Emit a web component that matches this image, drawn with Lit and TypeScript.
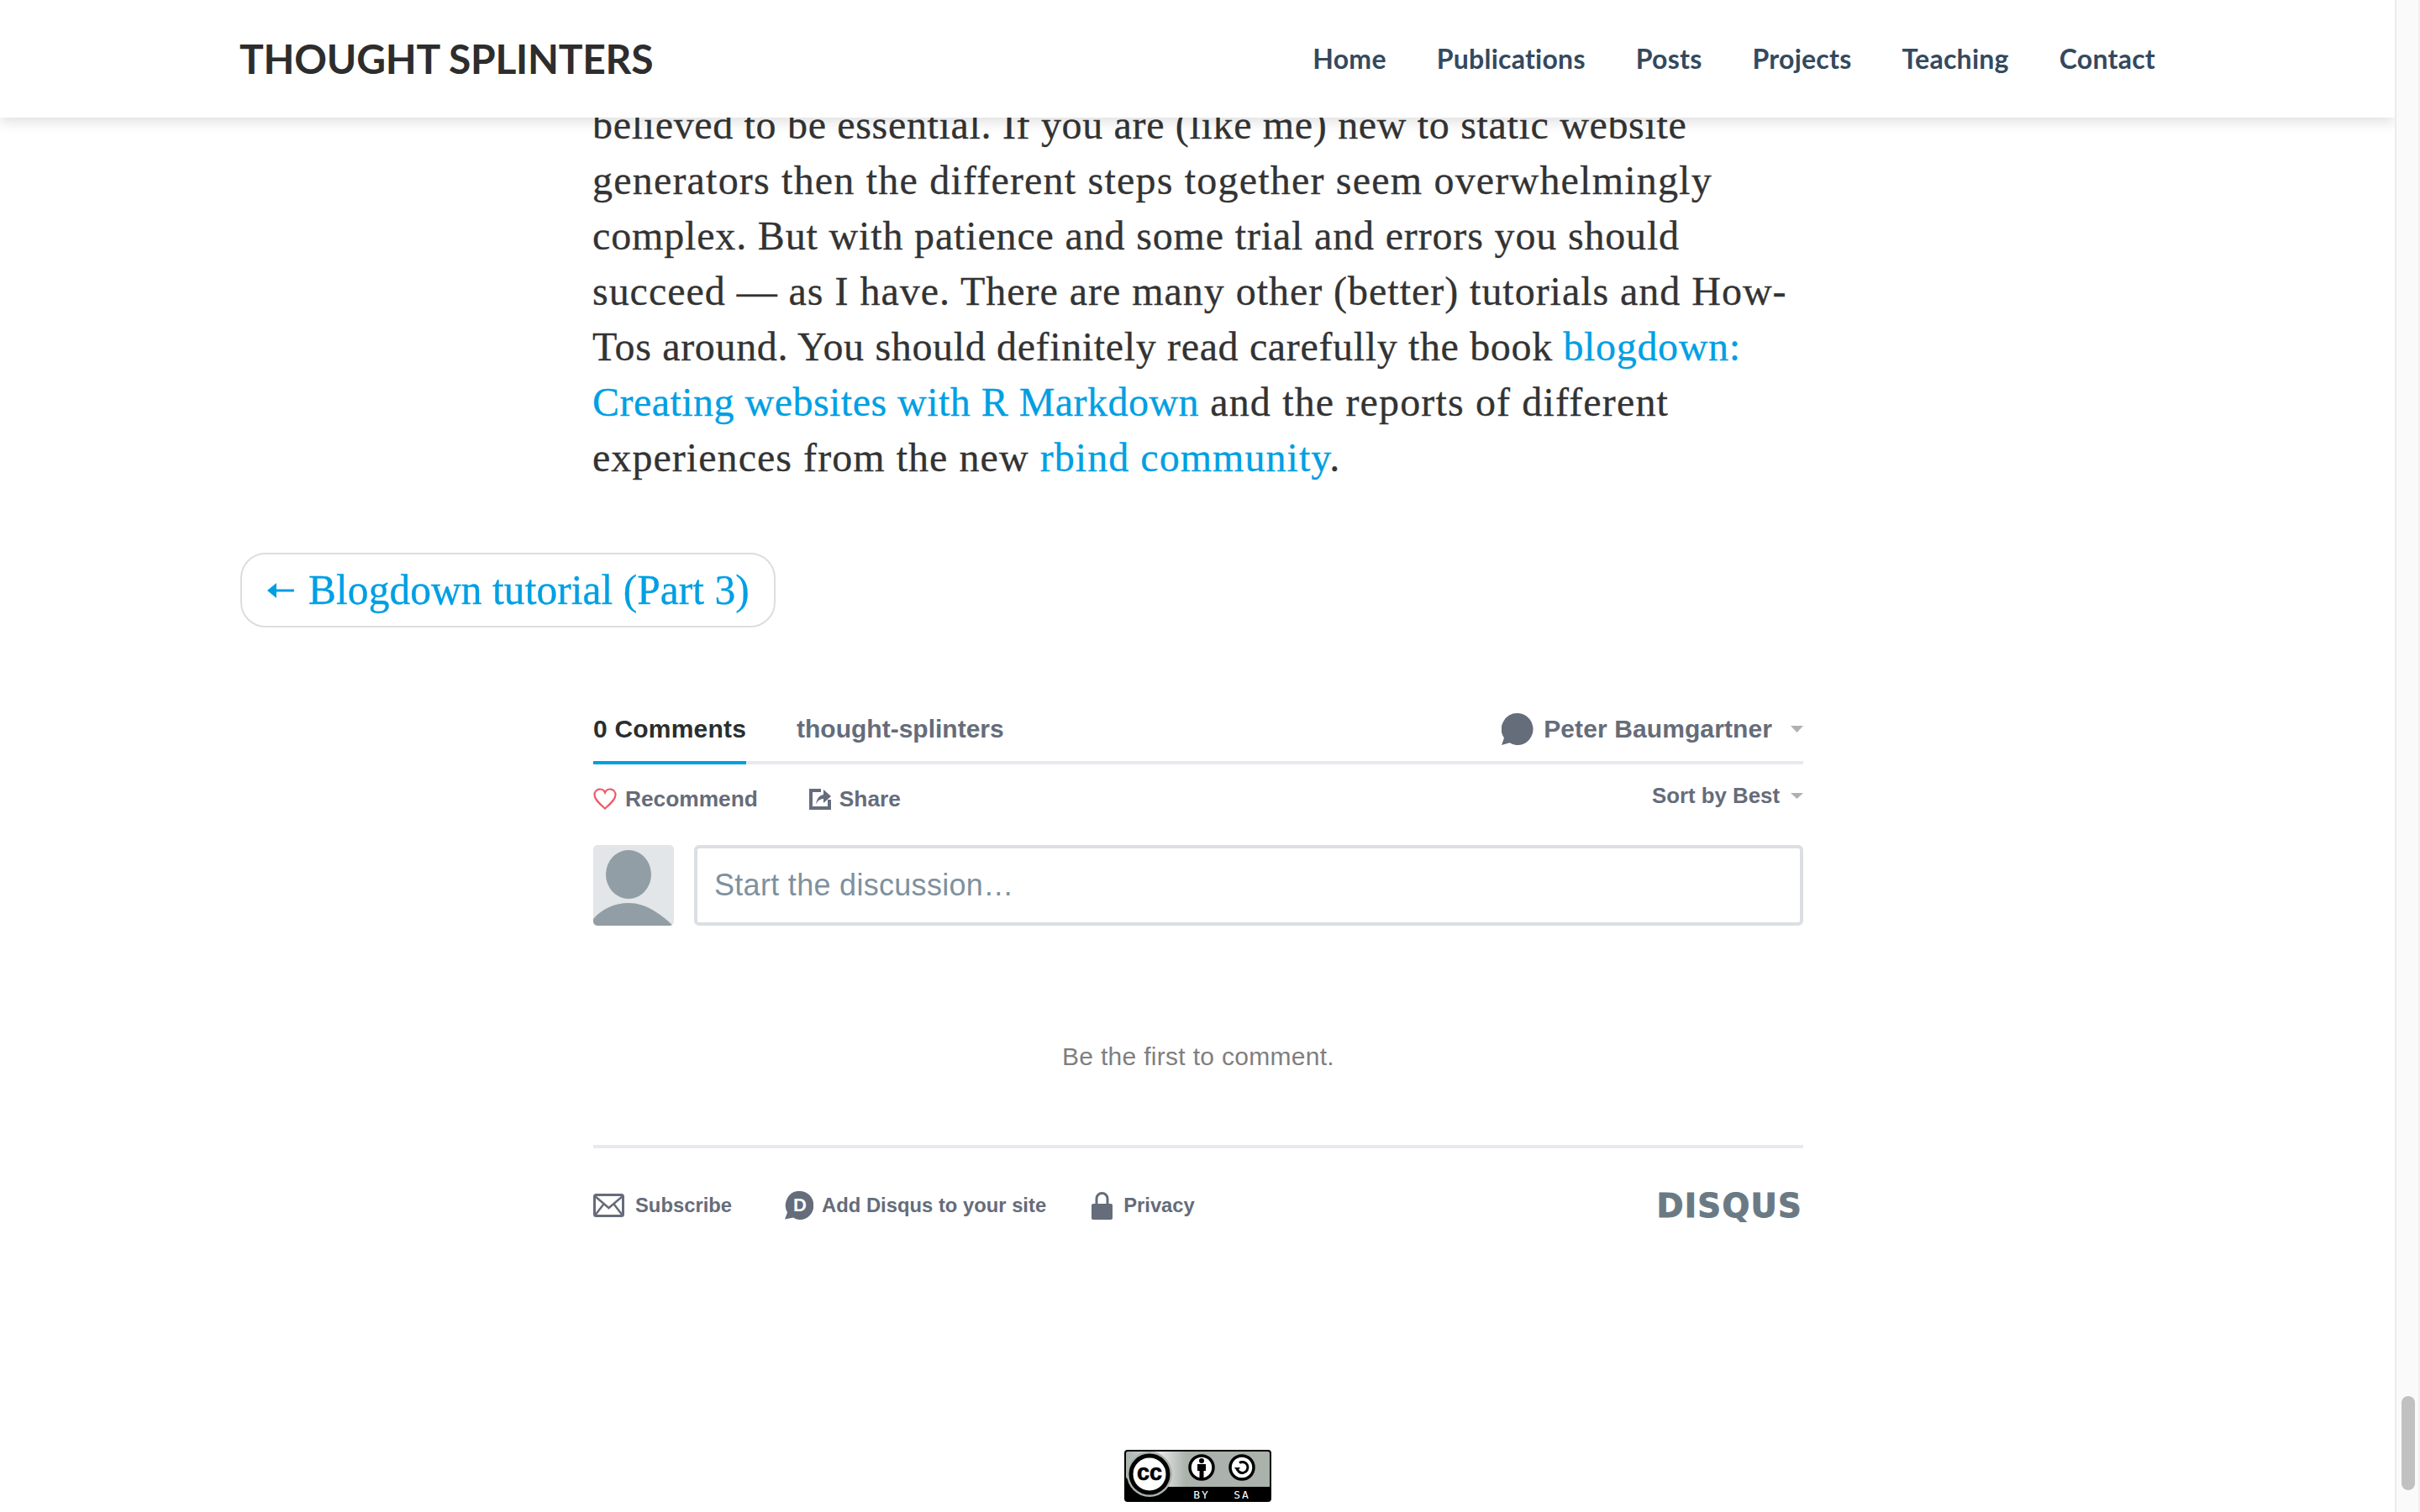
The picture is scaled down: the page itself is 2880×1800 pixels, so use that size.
import { LitElement, html, css } from 'lit';
import { customElement } from 'lit/decorators.js';

const NAV = ['Home', 'Publications', 'Posts', 'Projects', 'Teaching', 'Contact'];

// each line is set by hand, the spacing makes up for the substitute font
const LINES = [
  { spacing: 0.67, text: html`believed to be essential. If you are (like me) new to static website` },
  { spacing: 1.2, text: html`generators then the different steps together seem overwhelmingly` },
  { spacing: 0.84, text: html`complex. But with patience and some trial and errors you should` },
  { spacing: 0.97, text: html`succeed — as I have. There are many other (better) tutorials and How-` },
  { spacing: 0.65, text: html`Tos around. You should definitely read carefully the book <a>blogdown:</a>` },
  { spacing: 1.15, text: html`<a class="tight">Creating websites with R Markdown</a> and the reports of different` },
  { spacing: 1.05, text: html`experiences from the new <a>rbind community</a>.` },
];

@customElement('app-root')
export class AppRoot extends LitElement {
  static styles = css`
    :host {
      display: flex;
      width: 2880px;
      height: 1800px;
      overflow: hidden;
      background: #fff;
      font-family: 'Liberation Sans', Arial, sans-serif;
    }
    .page {
      position: relative;
      width: 2850px;
      height: 1800px;
      overflow: hidden;
      flex: none;
    }
    .header {
      position: absolute;
      top: 0;
      left: 0;
      right: 0;
      height: 140px;
      background: #fff;
      box-shadow: 0 4px 16px rgba(0, 0, 0, 0.14);
      z-index: 2;
    }
    .header-inner {
      width: 2280px;
      height: 140px;
      margin: 0 auto;
      display: flex;
      align-items: center;
      justify-content: space-between;
      font-family: Lato, sans-serif;
    }
    .logo {
      font-size: 48px;
      font-weight: 700;
      color: #2d2d2d;
      letter-spacing: -0.27px;
      padding-bottom: 2px;
    }
    .nav {
      display: flex;
      gap: 60px;
      font-size: 32px;
      font-weight: 700;
      letter-spacing: 0.25px;
      color: #34495e;
      padding-bottom: 2px;
    }
    .main {
      padding-top: 116px;
    }
    .article {
      width: 1440px;
      margin: 0 auto;
      font-family: 'Liberation Serif', serif;
      font-size: 48px;
      line-height: 66px;
      color: #333;
      white-space: nowrap;
      -webkit-text-stroke: 0.3px currentColor;
    }
    .article a,
    .prev {
      color: #009fe3;
      text-decoration: none;
    }
    .article a.tight {
      letter-spacing: 0.47px;
    }
    .pager {
      width: 2280px;
      margin: 80px auto 0;
      padding-left: 2px;
    }
    .prev {
      display: inline-flex;
      align-items: center;
      gap: 17px;
      box-sizing: border-box;
      height: 89px;
      padding: 0 29px 0 30px;
      border: 2px solid #ddd;
      border-radius: 30px;
      font-family: 'Liberation Serif', serif;
      font-size: 49.6px;
      -webkit-text-stroke: 0.3px currentColor;
    }
    .disqus {
      width: 1440px;
      margin: 93px 0 0 706px;
      color: #656c7a;
      font-weight: 700;
    }
    .tabs {
      display: flex;
      align-items: flex-start;
      height: 66px;
      border-bottom: 4px solid #e7e9ee;
      font-size: 30px;
    }
    .tab {
      height: 66px;
      line-height: 56px;
      margin-bottom: -4px;
    }
    .tab.active {
      color: #2a2e2e;
      height: 66px;
      border-bottom: 4px solid #009fe3;
      margin-right: 60px;
      letter-spacing: 0.2px;
    }
    .user {
      margin-left: auto;
      display: flex;
      align-items: center;
      height: 56px;
      letter-spacing: 0.1px;
    }
    .user svg:first-child {
      margin-right: 12px;
    }
    .caret {
      margin-left: 22px;
    }
    .actions {
      display: flex;
      height: 96px;
      font-size: 26.3px;
    }
    .action {
      display: flex;
      align-items: center;
      height: 30px;
      margin-top: 26px;
    }
    .action svg {
      margin-right: 10px;
    }
    .action.recommend {
      margin-right: 61px;
    }
    .sort {
      margin-left: auto;
      display: flex;
      align-items: center;
      height: 30px;
      margin-top: 22px;
      font-size: 25.8px;
    }
    .sort .caret {
      margin-left: 13px;
    }
    .compose {
      display: flex;
      gap: 24px;
    }
    .avatar {
      display: block;
      flex: none;
      border-radius: 5px;
    }
    .input {
      flex: 1;
      box-sizing: border-box;
      height: 96px;
      padding-left: 20px;
      display: flex;
      align-items: center;
      border: 4px solid #dbdfe4;
      border-radius: 6px;
      font-size: 36px;
      letter-spacing: 0.3px;
      font-weight: 400;
      color: #7f919e;
    }
    .empty {
      height: 265px;
      box-sizing: border-box;
      padding-top: 136px;
      border-bottom: 4px solid #e7e9ee;
      text-align: center;
      font-size: 30px;
      letter-spacing: 0.3px;
      line-height: 40px;
      font-weight: 400;
      color: #7f7f7f;
    }
    .foot {
      display: flex;
      align-items: center;
      height: 136px;
      font-size: 23.8px;
    }
    .foot span {
      display: flex;
      align-items: center;
    }
    .foot .subscribe {
      margin-right: 63px;
    }
    .foot .add {
      margin-right: 54px;
    }
    .brand {
      margin-left: auto;
      margin-right: 1px;
      font-family: 'DejaVu Sans', sans-serif;
      font-size: 38.5px;
      font-weight: 700;
      letter-spacing: 1.3px;
      color: #6a7a85;
      -webkit-text-stroke: 1px #6a7a85;
    }
    .license {
      margin-top: 223px;
      display: flex;
      justify-content: center;
      width: 100%;
    }
    .license svg {
      display: block;
    }
    .scrollbar {
      flex: none;
      box-sizing: border-box;
      width: 30px;
      height: 1800px;
      padding: 1662px 4px 0 6px;
      background: #fafafa;
      border-left: 2px solid #ececec;
      border-right: 2px solid #f0f0f0;
    }
    .thumb {
      height: 112px;
      border-radius: 8px;
      background: #c1c1c1;
    }
  `;

  render() {
    return html`
      <div class="page">
        <header class="header">
          <div class="header-inner">
            <div class="logo">THOUGHT SPLINTERS</div>
            <nav class="nav">${NAV.map((n) => html`<span>${n}</span>`)}</nav>
          </div>
        </header>
        <div class="main">
          <div class="article">
            ${LINES.map((l) => html`<div style="letter-spacing:${l.spacing}px">${l.text}</div>`)}
          </div>
          <div class="pager">
            <div class="prev">
              <svg width="32" height="18" viewBox="0 0 32 18"><path fill="#009fe3" d="M0 9l11-9v7.500h21v3H11V18z"/></svg>
              <span>Blogdown tutorial (Part 3)</span>
            </div>
          </div>
          <div class="disqus">
            <div class="tabs">
              <div class="tab active">0 Comments</div>
              <div class="tab">thought-splinters</div>
              <div class="user">
                <svg width="38" height="40" viewBox="0 0 38 40"><path fill="#656c7a" d="M19 1a18.500 19 0 1 1-9.500 35.300L0 39l3-8.500A19 19 0 0 1 19 1z"/></svg>
                Peter Baumgartner
                <svg class="caret" width="15" height="8" viewBox="0 0 15 8"><path fill="#b0b0b0" d="M0 0h15L7.500 8z"/></svg>
              </div>
            </div>
            <div class="actions">
              <div class="action recommend">
                <svg width="28" height="26" viewBox="0 0 28 26"><path fill="none" stroke="#ef5a66" stroke-width="2.200" d="M14 24.500C8 19 1.500 14 1.500 8A6.500 6.500 0 0 1 14 5.500 6.500 6.500 0 0 1 26.500 8C26.500 14 20 19 14 24.500z"/></svg>
                Recommend
              </div>
              <div class="action">
                <svg width="26" height="25" viewBox="0 0 26 25"><path fill="#656c7a" d="M0 0h14v4H4v17h18v-8h4v12H0z"/><path fill="#656c7a" d="M17 1l9 8-9 8v-5c-4 0-7 2-9 7 1-8 4-11 9-12z"/></svg>
                Share
              </div>
              <div class="sort">
                Sort by Best
                <svg class="caret" width="15" height="7" viewBox="0 0 15 7"><path fill="#b0b0b0" d="M0 0h15L7.500 7z"/></svg>
              </div>
            </div>
            <div class="compose">
              <svg class="avatar" width="96" height="96" viewBox="0 0 96 96">
                <rect width="96" height="96" fill="#e2e6e9"/>
                <ellipse cx="42" cy="35" rx="27" ry="29" fill="#929ea5"/>
                <path fill="#929ea5" d="M0 88C10 76 26 69 42 69 60 69 76 78 95 96H0z"/>
              </svg>
              <div class="input">Start the discussion…</div>
            </div>
            <div class="empty">Be the first to comment.</div>
            <div class="foot">
              <span class="subscribe">
                <svg style="margin-right:13px" width="37" height="28" viewBox="0 0 37 28"><rect x="1.500" y="1.500" width="34" height="25" rx="2" fill="none" stroke="#656c7a" stroke-width="3"/><path fill="none" stroke="#656c7a" stroke-width="2.500" d="M2 3l16.500 14L35 3M2 26l10-13M35 26L25 13"/></svg>
                Subscribe
              </span>
              <span class="add">
                <svg style="margin-right:10px" width="34" height="34" viewBox="0 0 34 34"><path fill="#656c7a" d="M18 0a16 17 0 1 1-8 31.500L0 33.500l3-8A16 17 0 0 1 18 0z"/><text x="18" y="24" text-anchor="middle" font-family="Liberation Sans" font-weight="700" font-size="22" fill="#fff">D</text></svg>
                Add Disqus to your site
              </span>
              <span>
                <svg style="margin-right:13px" width="25" height="33" viewBox="0 0 25 33"><path fill="none" stroke="#656c7a" stroke-width="3" d="M6 15V8a6.500 6.500 0 0 1 13 0v7"/><rect y="14" width="25" height="19" rx="2" fill="#656c7a"/></svg>
                Privacy
              </span>
              <div class="brand">DISQUS</div>
            </div>
          </div>
          <div class="license">
            <svg width="175" height="62" viewBox="0 0 175 62">
              <defs>
                <linearGradient id="cc" x1="0" x2="1" y1="0" y2="0">
                  <stop offset="0" stop-color="#aab2ab"/>
                  <stop offset="0.25" stop-color="#e4e4e4"/>
                  <stop offset="0.42" stop-color="#aab2ab"/>
                </linearGradient>
              </defs>
              <rect x="1" y="1" width="173" height="60" rx="3" fill="url(#cc)" stroke="#000" stroke-width="2"/>
              <path d="M14 44h160v15a2 2 0 0 1-2 2H3a2 2 0 0 1-2-2V32z" fill="#000"/>
              <circle cx="30" cy="29" r="27" fill="#aab2ab"/>
              <circle cx="30" cy="29" r="22" fill="#fff" stroke="#000" stroke-width="5"/>
              <text x="30" y="36" text-anchor="middle" font-family="Liberation Sans" font-weight="700" font-size="27" stroke="#000" stroke-width="0.6" fill="#000">cc</text>
              <circle cx="92" cy="21" r="14" fill="#fff" stroke="#000" stroke-width="3.500"/>
              <circle cx="92" cy="13" r="3" fill="#000"/>
              <path d="M87 17h10v8h-2.500v9h-5v-9H87z" fill="#000"/>
              <circle cx="140" cy="21" r="14" fill="#fff" stroke="#000" stroke-width="3.500"/>
              <path d="M134 21a6.500 6.500 0 1 0 3-5.500" fill="none" stroke="#000" stroke-width="3"/>
              <path d="M131 21h7l-3.500 4.500z" fill="#000"/>
              <text x="92" y="58" text-anchor="middle" font-family="DejaVu Sans Mono" font-size="13" letter-spacing="2" fill="#fff">BY</text>
              <text x="140" y="58" text-anchor="middle" font-family="DejaVu Sans Mono" font-size="13" letter-spacing="2" fill="#fff">SA</text>
            </svg>
          </div>
        </div>
      </div>
      <div class="scrollbar"><div class="thumb"></div></div>
    `;
  }
}
